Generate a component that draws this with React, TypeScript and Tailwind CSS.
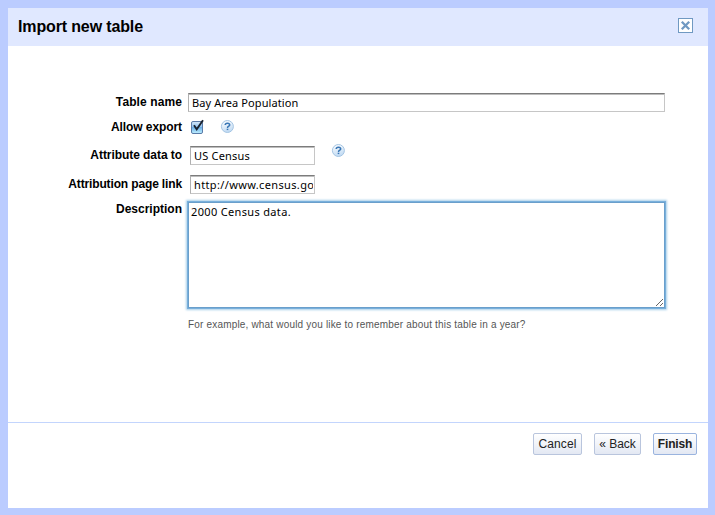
import React from "react";

const UI = "font-['Liberation_Sans',Arial,sans-serif]";
const FIELD = "font-['Noto_Sans','Open_Sans',sans-serif]";

function Label({ children, className }: { children: React.ReactNode; className: string }) {
  return (
    <div className={`w-[174px] shrink-0 text-right text-[12px] font-bold leading-[14px] whitespace-nowrap text-black ${className}`}>
      {children}
    </div>
  );
}

function Help({ className }: { className: string }) {
  return (
    <svg className={`h-[14px] w-[14px] shrink-0 ${className}`} viewBox="0 0 14 14">
      <defs>
        <linearGradient id="helpFill" x1="0" y1="0" x2="0.3" y2="1">
          <stop offset="0" stopColor="#ffffff" />
          <stop offset="1" stopColor="#c3dcf4" />
        </linearGradient>
      </defs>
      <circle cx="7.4" cy="7.5" r="6" fill="url(#helpFill)" stroke="#9dbfe0" strokeWidth="0.9" />
      <path d="M5.2 6C5.2 3.6 9.7 3.6 9.7 6C9.7 7.3 7.5 7.2 7.5 8.9" fill="none" stroke="#3976b5" strokeWidth="1.5" />
      <rect x="6.7" y="9.7" width="1.6" height="1.4" fill="#3976b5" />
    </svg>
  );
}

function Field({ value, className, textClass }: { value: string; className: string; textClass: string }) {
  return (
    <input
      type="text"
      defaultValue={value}
      className={`h-[19px] shrink-0 border border-[#c6c6c6] border-t-[#7c7c7c] border-l-[#b0b0b0] bg-white pr-[1px] pb-[1px] pl-[3px] text-[11px] text-black shadow-[inset_0_1px_0_#bdbdbd] outline-none ${FIELD} ${className} ${textClass}`}
    />
  );
}

function Checkbox() {
  return (
    <svg className="ml-[8px] h-[16px] w-[16px] shrink-0" viewBox="0 0 16 16">
      <defs>
        <linearGradient id="checkFill" x1="0" y1="0" x2="0" y2="1">
          <stop offset="0" stopColor="#d9eafa" />
          <stop offset="0.45" stopColor="#91c2ee" />
          <stop offset="0.5" stopColor="#6bafe8" />
          <stop offset="1" stopColor="#c2f1ff" />
        </linearGradient>
      </defs>
      <rect x="1.5" y="2.5" width="11" height="12" rx="1.5" fill="url(#checkFill)" stroke="#5a7ba8" />
      <path d="M4 6.3L6.7 10.3L13 1.2" fill="none" stroke="#18212e" strokeWidth="1.9" />
    </svg>
  );
}

function Button({ children, className }: { children: React.ReactNode; className: string }) {
  return (
    <button
      className={`flex h-[22px] items-center justify-center rounded-[2px] border bg-linear-to-b from-white to-[#e3e8f3] text-[12px] leading-[14px] whitespace-nowrap text-[#222] ${className}`}
    >
      {children}
    </button>
  );
}

export default function App() {
  return (
    <div className={`h-[515px] w-[715px] overflow-hidden bg-[#bbccff] pt-[8px] pr-[7px] pb-[7px] pl-[8px] ${UI}`}>
      <div className="flex h-[500px] flex-col bg-white">
        <header className="flex h-[38px] shrink-0 items-start justify-between bg-[#e0e8ff] pr-[15px] pl-[10px]">
          <h1 className="pt-[9px] text-[16px] leading-[19px] font-bold tracking-[-0.14px] text-black">Import new table</h1>
          <button className="mt-[10px] h-[15px] w-[15px]" aria-label="Close">
            <svg className="block h-[15px] w-[15px]" viewBox="0 0 15 15">
              <rect x="0.5" y="0.5" width="14" height="14" fill="#fff" stroke="#7099c2" />
              <path d="M3.8 3.8L11.2 11.2M11.2 3.8L3.8 11.2" fill="none" stroke="#7099c2" strokeWidth="2.3" />
            </svg>
          </button>
        </header>

        <main className="h-[376px] shrink-0 pt-[47px]">
          <div className="flex h-[26px] items-start">
            <Label className="pt-[2px] tracking-[0.1px]">Table name</Label>
            <Field value="Bay Area Population" className="ml-[6px] w-[477px]" textClass="tracking-[0.1px]" />
          </div>
          <div className="flex h-[27px] items-start">
            <Label className="pt-[1px] tracking-[-0.08px]">Allow export</Label>
            <Checkbox />
            <Help className="ml-[14px]" />
          </div>
          <div className="flex h-[29px] items-start">
            <Label className="pt-[2px] tracking-[-0.06px]">Attribute data to</Label>
            <Field value="US Census" className="ml-[8px] w-[125px]" textClass="tracking-[0.2px]" />
            <Help className="mt-[-3px] ml-[16px]" />
          </div>
          <div className="flex h-[27px] items-start">
            <Label className="pt-[2px] tracking-[-0.14px]">Attribution page link</Label>
            <Field value="http://www.census.gov" className="ml-[8px] w-[125px]" textClass="tracking-[0.36px]" />
          </div>
          <div className="flex h-[117px] items-start">
            <Label className="">Description</Label>
            <textarea
              defaultValue="2000 Census data."
              className={`ml-[6px] h-[106px] w-[477px] resize border border-[#6a9fcb] bg-white px-[2px] py-[1px] text-[11px] leading-[15px] tracking-[0.34px] text-black shadow-[0_0_0_1px_#79b0dc,0_0_2px_2px_#a9cfea] outline-none ${FIELD}`}
            />
          </div>
          <p className="pl-[180px] text-[10px] leading-[12px] tracking-[0.18px] text-[#555]">
            For example, what would you like to remember about this table in a year?
          </p>
        </main>

        <footer className="flex h-[86px] justify-end gap-[12px] border-t border-[#c3d5fd] pt-[10px] pr-[11px]">
          <Button className="w-[49px] border-[#b9c5dd] tracking-[0.1px]">Cancel</Button>
          <Button className="w-[47px] border-[#b9c5dd]">« Back</Button>
          <Button className="w-[44px] border-[#9ab4df] font-bold tracking-[-0.15px]">Finish</Button>
        </footer>
      </div>
    </div>
  );
}
